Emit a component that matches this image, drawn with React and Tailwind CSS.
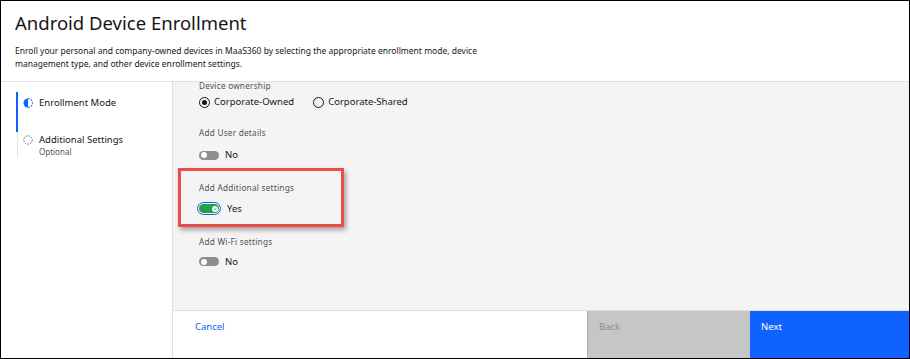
import React from 'react';

const FONT = { fontFamily: '"Noto Sans", "Open Sans", sans-serif' };

function Toggle({ on, label }) {
  return (
    <div className="flex items-center gap-[6px]">
      {on ? (
        <div className="rounded-full border border-[#0f62fe] p-[1px]">
          <div className="w-[20px] h-[9px] rounded-full bg-[#24a148] flex items-center justify-end pr-[1.5px]">
            <div className="w-[6px] h-[6px] rounded-full bg-white flex items-center justify-center">
              <svg width="4" height="4" viewBox="0 0 8 8"><path d="M1.5 4.2 L3.3 6 L6.6 2" stroke="#24a148" strokeWidth="1.6" fill="none" /></svg>
            </div>
          </div>
        </div>
      ) : (
        <div className="w-[20px] h-[9px] rounded-full bg-[#8d8d8d] flex items-center pl-[1.5px]">
          <div className="w-[6px] h-[6px] rounded-full bg-white" />
        </div>
      )}
      <span className="text-[9.5px] text-[#161616]">{label}</span>
    </div>
  );
}

function Radio({ checked, label }) {
  return (
    <div className="flex items-center gap-[4px]">
      <div className="w-[11px] h-[11px] rounded-full border border-[#161616] flex items-center justify-center">
        {checked && <div className="w-[5px] h-[5px] rounded-full bg-[#161616]" />}
      </div>
      <span className="text-[9.5px] text-[#161616]">{label}</span>
    </div>
  );
}

function Field({ label, children, className = '' }) {
  return (
    <div className={className}>
      <div className="text-[8.2px] tracking-[0.25px] text-[#525252] leading-[10px]">{label}</div>
      {children}
    </div>
  );
}

export default function App() {
  return (
    <div className="w-[910px] h-[359px] border border-black bg-white flex flex-col overflow-hidden" style={FONT}>
      <div className="h-[81px] shrink-0 border-b border-[#e0e0e0] px-[14px] pt-[10px]">
        <h1 className="text-[18.5px] leading-[24px] text-[#161616]">Android Device Enrollment</h1>
        <p className="mt-[9px] text-[8.5px] leading-[13px] text-[#161616] w-[470px]">
          Enroll your personal and company-owned devices in MaaS360 by selecting the appropriate enrollment mode, device management type, and other device enrollment settings.
        </p>
      </div>

      <div className="flex flex-1 min-h-0">
        <div className="w-[172px] shrink-0 border-r border-[#e0e0e0] pl-[15px] pt-[10px]">
          <div className="border-l-2 border-[#0f62fe] h-[40px] pl-[5px] pt-[4px] flex items-start gap-[6px]">
            <svg width="10" height="10" viewBox="0 0 10 10" className="mt-[2px] shrink-0">
              <path d="M5 0.5 A4.5 4.5 0 0 0 5 9.5 Z" fill="#0f62fe" />
              <path d="M5 0.5 A4.5 4.5 0 0 1 5 9.5" fill="none" stroke="#0f62fe" strokeWidth="1.2" strokeDasharray="1.6 1.4" />
            </svg>
            <span className="text-[9.5px] leading-[14px] text-[#161616]">Enrollment Mode</span>
          </div>
          <div className="border-l border-[#e0e0e0] ml-[1px] h-[25px] pl-[5px] pt-[1px] flex items-start gap-[6px]">
            <svg width="10" height="10" viewBox="0 0 10 10" className="mt-[2px] shrink-0">
              <circle cx="5" cy="5" r="4.2" fill="none" stroke="#525252" strokeWidth="0.9" strokeDasharray="1.5 1.3" />
            </svg>
            <div>
              <div className="text-[9.5px] leading-[14px] text-[#161616]">Additional Settings</div>
              <div className="text-[8px] leading-[9px] text-[#525252]">Optional</div>
            </div>
          </div>
        </div>

        <div className="flex-1 flex flex-col min-w-0">
          <div className="flex-1 bg-[#f4f4f4] relative overflow-hidden pl-[26px]">
            <div className="-mt-[1px]">
              <Field label="Device ownership">
                <div className="flex items-center gap-[19px] mt-[4px]">
                  <Radio checked label="Corporate-Owned" />
                  <Radio label="Corporate-Shared" />
                </div>
              </Field>
              <Field label="Add User details" className="mt-[19px]">
                <div className="mt-[10px]"><Toggle label="No" /></div>
              </Field>
              <Field label="Add Additional settings" className="mt-[20px]">
                <div className="mt-[9px] -ml-[2px]"><Toggle on label="Yes" /></div>
              </Field>
              <Field label="Add Wi-Fi settings" className="mt-[21px]">
                <div className="mt-[8px]"><Toggle label="No" /></div>
              </Field>
            </div>
            <div className="absolute left-[5px] top-[86px] w-[166px] h-[59px] border-[3px] border-[#ef4a4a] shadow-[2px_3px_5px_rgba(0,0,0,0.35)]" />
          </div>
          <div className="h-[48px] shrink-0 border-t border-[#e0e0e0] flex">
            <div className="flex-1 bg-white pl-[22px] pt-[9px] text-[9.5px] text-[#0f62fe]">Cancel</div>
            <div className="w-[163px] bg-[#c6c6c6] pl-[11px] pt-[9px] text-[9.5px] text-[#8d8d8d] border-l border-[#b0b0b0]">Back</div>
            <div className="w-[159px] bg-[#0f62fe] pl-[11px] pt-[9px] text-[9.5px] text-white">Next</div>
          </div>
        </div>
      </div>
    </div>
  );
}
